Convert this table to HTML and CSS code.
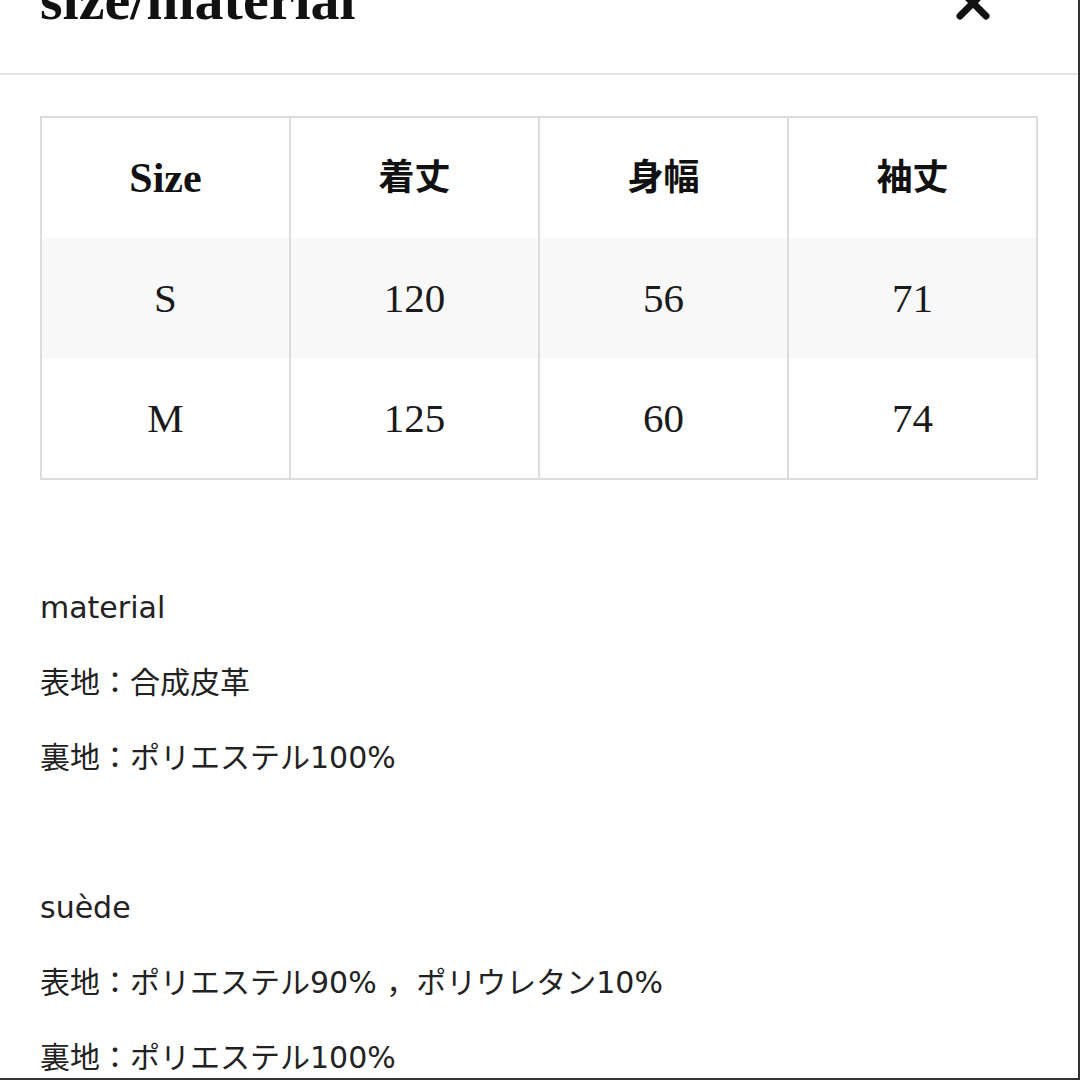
FILE: index.html
```html
<!DOCTYPE html>
<html lang="ja">
<head>
<meta charset="utf-8">
<link rel="stylesheet" href="styles.css">
</head>
<body>
<div class="frame">
  <header class="head">
    <h1 class="title">size/material</h1>
    <button class="close" aria-label="close">
      <svg width="36" height="36" viewBox="0 0 36 36"><path d="M5 5 L31 31 M31 5 L5 31" stroke="#111" stroke-width="7" stroke-linecap="round" fill="none"/></svg>
    </button>
  </header>
  <main class="content">
    <table class="sizes">
      <thead>
        <tr><th class="lat">Size</th><th>着丈</th><th>身幅</th><th>袖丈</th></tr>
      </thead>
      <tbody>
        <tr class="alt"><td>S</td><td>120</td><td>56</td><td>71</td></tr>
        <tr><td>M</td><td>125</td><td>60</td><td>74</td></tr>
      </tbody>
    </table>
    <div class="notes">
      <div class="line">material</div>
      <div class="line">表地：合成皮革</div>
      <div class="line">裏地：ポリエステル100%</div>
      <div class="line blank"></div>
      <div class="line">suède</div>
      <div class="line">表地：ポリエステル90% ，ポリウレタン10%</div>
      <div class="line">裏地：ポリエステル100%</div>
    </div>
  </main>
</div>
</body>
</html>
```

FILE: styles.css
```css
html, body {
  margin: 0;
  padding: 0;
  background: #fff;
}
.frame {
  width: 1078px;
  height: 1078px;
  overflow: hidden;
  border-right: 2px solid #333;
  border-bottom: 2px solid #333;
  background: #fff;
  color: #1e1e1e;
}
.head {
  height: 73px;
  border-bottom: 2px solid #e3e3e3;
  display: flex;
  justify-content: space-between;
  align-items: flex-start;
  padding: 0 87px 0 40px;
}
.title {
  margin: -28px 0 0 0;
  font-family: "Liberation Serif", serif;
  font-weight: 700;
  font-size: 58px;
  line-height: 56px;
  color: #111;
}
.close {
  margin-top: -15px;
  padding: 0;
  border: 0;
  background: none;
  width: 36px;
  height: 36px;
  display: block;
}
.close svg { display: block; }
.content {
  padding: 41px 0 0 40px;
}
.sizes {
  width: 998px;
  border-collapse: collapse;
  table-layout: fixed;
  border: 2px solid #dcdcdc;
}
.sizes th, .sizes td {
  border: 2px solid #dcdcdc;
  border-top: 0;
  border-bottom: 0;
  text-align: center;
  padding: 0;
  height: 120px;
}
.sizes th {
  font-family: "Liberation Serif", "Noto Sans CJK JP", serif;
  font-weight: 700;
  font-size: 36px;
  line-height: 40px;
  color: #111;
}
.sizes th.lat {
  font-size: 42px;
}
.sizes td {
  font-family: "Liberation Serif", serif;
  font-weight: 400;
  font-size: 41px;
  color: #1a1a1a;
}
.sizes tr.alt td {
  background: #f8f8f8;
}
.notes {
  padding-top: 90px;
  font-family: "DejaVu Sans", "Noto Sans CJK JP", sans-serif;
  font-size: 30px;
  color: #222;
}
.line {
  height: 75px;
  line-height: 75px;
  white-space: nowrap;
}
```
